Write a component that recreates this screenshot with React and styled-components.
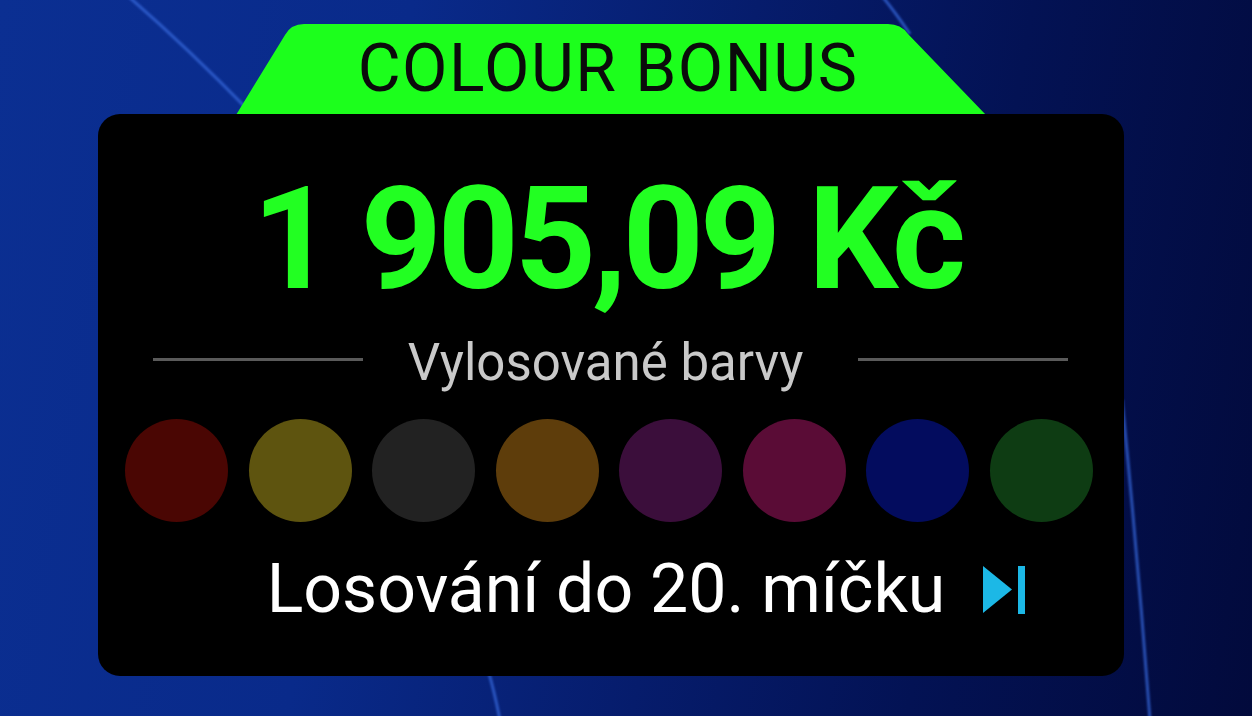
import styled, { createGlobalStyle } from 'styled-components'

const GlobalStyle = createGlobalStyle`
    html, body {
        margin: 0;
        padding: 0;
        width: 1252px;
        height: 716px;
        overflow: hidden;
    }
    body {
        font-family: Roboto, "Liberation Sans", sans-serif;
        background: linear-gradient(100deg, #0b2f92 0%, #092a8a 30%, #061c6c 55%, #031254 75%, #020a3c 100%);
    }
`

const balls = ['#4a0603', '#5e540f', '#222222', '#5e3d0b', '#3b0e3b', '#5a0c36', '#030c5e', '#0e3c13']

const App = () => {
    return (
        <>
            <GlobalStyle />
            <Stage>
                <Streaks viewBox="0 0 1252 716" preserveAspectRatio="none">
                    <path d="M128 -4 Q190 50 250 112" />
                    <path d="M882 -4 Q895 12 910 34" />
                    <path d="M1122 400 Q1138 560 1150 720" />
                    <path d="M488 670 Q494 690 500 720" />
                </Streaks>
                <Board>
                    <Tab>
                        <TabTitle>COLOUR BONUS</TabTitle>
                    </Tab>
                    <Card>
                        <Amount>1 905,09 Kč</Amount>
                        <DividerRow>
                            <Rule />
                            <DividerLabel>Vylosované barvy</DividerLabel>
                            <Rule />
                        </DividerRow>
                        <Balls>
                            {balls.map((c, i) => (
                                <Ball key={i} $color={c} />
                            ))}
                        </Balls>
                        <DrawRow>
                            <DrawText>Losování do 20. míčku</DrawText>
                            <SkipIcon viewBox="0 0 42 48">
                                <polygon points="0,0 29,23.5 0,47" />
                                <rect x="35" y="0" width="7" height="48" />
                            </SkipIcon>
                        </DrawRow>
                    </Card>
                </Board>
            </Stage>
        </>
    )
}

const Stage = styled.div`
    position: relative;
    width: 1252px;
    height: 716px;
`

const Streaks = styled.svg`
    position: absolute;
    inset: 0;
    width: 100%;
    height: 100%;
    z-index: 0;

    path {
        fill: none;
        stroke: #3566d8;
        stroke-width: 3;
        opacity: 0.75;
        filter: blur(0.8px);
    }
`

const Board = styled.div`
    position: relative;
    z-index: 1;
    width: 1026px;
    padding: 24px 0 0 98px;
    display: flex;
    flex-direction: column;
    align-items: center;
`

const Tab = styled.div`
    width: 750px;
    height: 90px;
    background: #1cff1c;
    clip-path: path('M0 91 L49 11 Q55 0 68 0 L652 0 Q665 0 672 10 L750 91 Z');
    display: flex;
    align-items: center;
    justify-content: center;
`

const TabTitle = styled.span`
    font-family: Roboto, "Liberation Sans", sans-serif;
    font-size: 66px;
    line-height: 1;
    letter-spacing: 1.5px;
    color: #0b0b0b;
    margin-left: -6px;
`

const Card = styled.div`
    width: 1026px;
    height: 562px;
    box-sizing: border-box;
    background: #000;
    border-radius: 22px;
    padding-top: 55px;
    display: flex;
    flex-direction: column;
    align-items: center;
`

const Amount = styled.div`
    font-family: Roboto, "Liberation Sans", sans-serif;
    font-weight: 700;
    font-size: 142px;
    line-height: 1;
    letter-spacing: -4.3px;
    color: #22ff22;
    margin-left: -8px;
`

const DividerRow = styled.div`
    margin-top: 26px;
    width: 100%;
    box-sizing: border-box;
    padding: 0 56px 0 55px;
    display: flex;
    align-items: center;
    gap: 45px;
`

const Rule = styled.div`
    flex: 1;
    height: 3px;
    background: #5a5a5a;
    margin-bottom: 7px;
`

const DividerLabel = styled.span`
    font-size: 51px;
    line-height: 1;
    color: #c9c9c9;
    margin-right: 10px;
`

const Balls = styled.div`
    margin-top: 31px;
    width: 100%;
    box-sizing: border-box;
    padding: 0 31px 0 27px;
    display: flex;
    justify-content: space-between;
`

const Ball = styled.div`
    width: 103px;
    height: 103px;
    border-radius: 50%;
    background: ${(p) => p.$color};
`

const DrawRow = styled.div`
    margin-top: 33px;
    width: 100%;
    display: grid;
    grid-template-columns: 1fr auto 1fr;
    align-items: center;
`

const DrawText = styled.span`
    grid-column: 2;
    font-size: 68px;
    line-height: 1;
    color: #fff;
    margin-left: -10px;
`

const SkipIcon = styled.svg`
    grid-column: 3;
    justify-self: start;
    width: 42px;
    height: 48px;
    margin-left: 38px;
    margin-top: 2px;
    fill: #1cb8e6;
`

export default App
